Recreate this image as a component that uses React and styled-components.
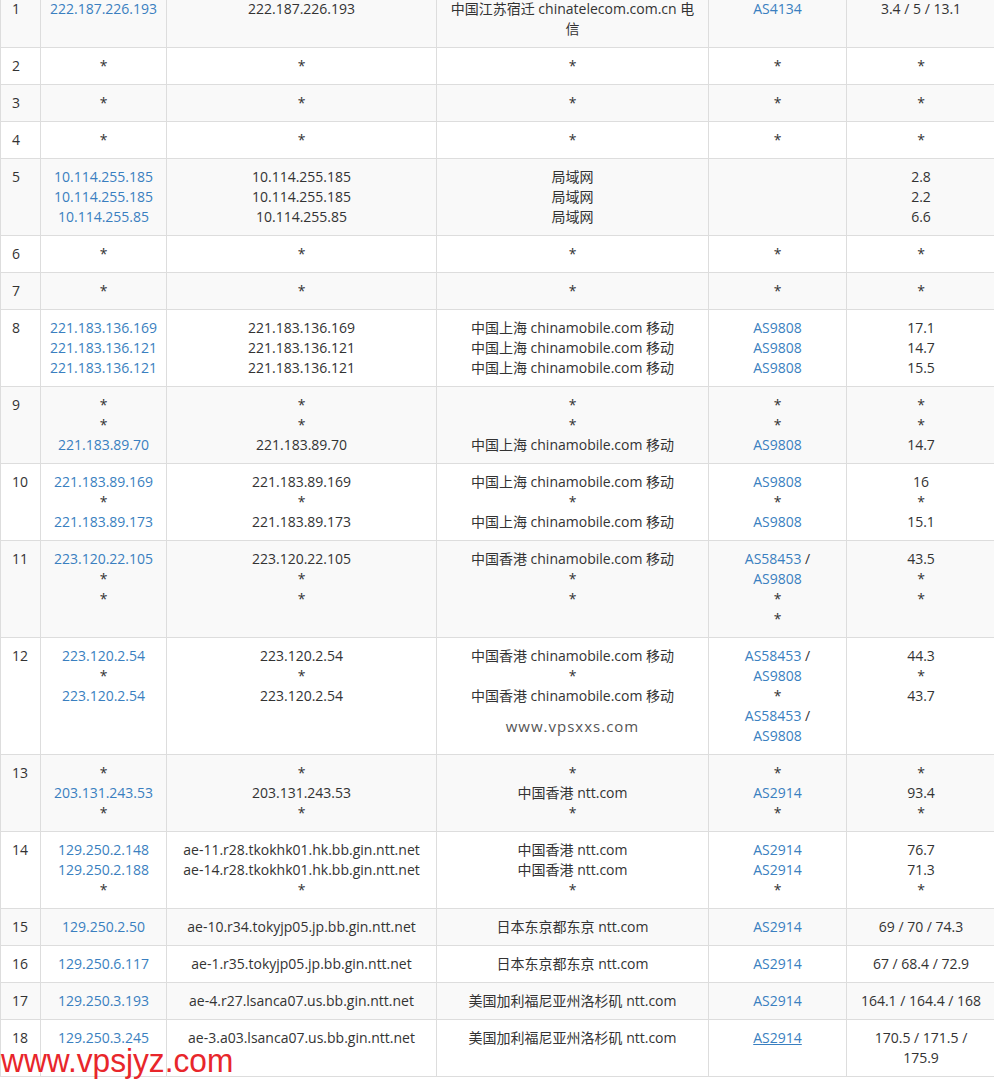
import React from "react";
import styled, { createGlobalStyle } from "styled-components";

const Global = createGlobalStyle`
  body { margin: 0; background: #fff; font-family: "Open Sans", "Noto Sans CJK SC", sans-serif; font-size: 14px; color: #333; overflow: hidden; }
`;

const Page = styled.div`position: relative; height: 1079px; overflow: hidden;`;
const Table = styled.table`
  border-collapse: collapse; table-layout: fixed; width: 995px; margin-top: -10px;
`;
const Tr = styled.tr`background: ${p => (p.$odd ? "#f9f9f9" : "#fff")};`;
const Td = styled.td`
  border: 1px solid #ddd; padding: 8px 6px; line-height: 20px; vertical-align: top;
  text-align: ${p => (p.$left ? "left" : "center")};
  ${p => p.$left && "padding-left: 11px;"}
`;
const Link = styled.span`color: #3a7fc0; ${p => p.$u && "text-decoration: underline;"}`;
const Line = styled.div``;
const Mark = styled.div`
  color: #555; letter-spacing: 1px; font-size: 15px; margin-top: 10px; line-height: 20px;
`;
const Red = styled.div`
  position: absolute; left: 1px; top: 1042px; color: #e8262b;
  font-family: "Liberation Sans", Arial, sans-serif; font-size: 33px; transform: scaleX(0.96); transform-origin: left;
`;

const L = ({ v, u }) => (v === "*" ? <Line>*</Line> : <Line><Link $u={u}>{v}</Link></Line>);
const P = ({ v }) => <Line>{v}</Line>;
const cm = "中国上海 chinamobile.com 移动";
const hk = "中国香港 chinamobile.com 移动";

const rows = [
  [["222.187.226.193"], ["222.187.226.193"], ["中国江苏宿迁 chinatelecom.com.cn 电", "信"], ["AS4134"], ["3.4 / 5 / 13.1"]],
  [["*"], ["*"], ["*"], ["*"], ["*"]],
  [["*"], ["*"], ["*"], ["*"], ["*"]],
  [["*"], ["*"], ["*"], ["*"], ["*"]],
  [["10.114.255.185", "10.114.255.185", "10.114.255.85"], ["10.114.255.185", "10.114.255.185", "10.114.255.85"], ["局域网", "局域网", "局域网"], [], ["2.8", "2.2", "6.6"]],
  [["*"], ["*"], ["*"], ["*"], ["*"]],
  [["*"], ["*"], ["*"], ["*"], ["*"]],
  [["221.183.136.169", "221.183.136.121", "221.183.136.121"], ["221.183.136.169", "221.183.136.121", "221.183.136.121"], [cm, cm, cm], ["AS9808", "AS9808", "AS9808"], ["17.1", "14.7", "15.5"]],
  [["*", "*", "221.183.89.70"], ["*", "*", "221.183.89.70"], ["*", "*", cm], ["*", "*", "AS9808"], ["*", "*", "14.7"]],
  [["221.183.89.169", "*", "221.183.89.173"], ["221.183.89.169", "*", "221.183.89.173"], [cm, "*", cm], ["AS9808", "*", "AS9808"], ["16", "*", "15.1"]],
  [["223.120.22.105", "*", "*"], ["223.120.22.105", "*", "*"], [hk, "*", "*"], ["AS58453 /|AS9808", "*", "*"], ["43.5", "*", "*"]],
  [["223.120.2.54", "*", "223.120.2.54"], ["223.120.2.54", "*", "223.120.2.54"], [hk, "*", hk], ["AS58453 /|AS9808", "*", "AS58453 /|AS9808"], ["44.3", "*", "43.7"], true],
  [["*", "203.131.243.53", "*"], ["*", "203.131.243.53", "*"], ["*", "中国香港 ntt.com", "*"], ["*", "AS2914", "*"], ["*", "93.4", "*"]],
  [["129.250.2.148", "129.250.2.188", "*"], ["ae-11.r28.tkokhk01.hk.bb.gin.ntt.net", "ae-14.r28.tkokhk01.hk.bb.gin.ntt.net", "*"], ["中国香港 ntt.com", "中国香港 ntt.com", "*"], ["AS2914", "AS2914", "*"], ["76.7", "71.3", "*"]],
  [["129.250.2.50"], ["ae-10.r34.tokyjp05.jp.bb.gin.ntt.net"], ["日本东京都东京 ntt.com"], ["AS2914"], ["69 / 70 / 74.3"]],
  [["129.250.6.117"], ["ae-1.r35.tokyjp05.jp.bb.gin.ntt.net"], ["日本东京都东京 ntt.com"], ["AS2914"], ["67 / 68.4 / 72.9"]],
  [["129.250.3.193"], ["ae-4.r27.lsanca07.us.bb.gin.ntt.net"], ["美国加利福尼亚州洛杉矶 ntt.com"], ["AS2914"], ["164.1 / 164.4 / 168"]],
  [["129.250.3.245"], ["ae-3.a03.lsanca07.us.bb.gin.ntt.net"], ["美国加利福尼亚州洛杉矶 ntt.com"], ["AS2914"], ["170.5 / 171.5 /", "175.9"], false, true],
];

const asCell = (v, u, k) =>
  v.includes("|") ? (
    <React.Fragment key={k}>
      <Line><Link>AS58453</Link> /</Line>
      <Line><Link>AS9808</Link></Line>
    </React.Fragment>
  ) : <L key={k} v={v} u={u} />;

export default function App() {
  return (
    <Page>
      <Global />
      <Table>
        <colgroup>
          <col style={{ width: 40 }} /><col style={{ width: 126 }} /><col style={{ width: 270 }} />
          <col style={{ width: 272 }} /><col style={{ width: 138 }} /><col style={{ width: 149 }} />
        </colgroup>
        <tbody>
          {rows.map((r, i) => (
            <Tr key={i} $odd={i % 2 === 0}>
              <Td $left>{i + 1}</Td>
              <Td>{r[0].map((v, k) => <L key={k} v={v} />)}</Td>
              <Td>{r[1].map((v, k) => <P key={k} v={v} />)}</Td>
              <Td>{r[2].map((v, k) => <P key={k} v={v} />)}{r[5] && <Mark>www.vpsxxs.com</Mark>}</Td>
              <Td>{r[3].map((v, k) => asCell(v, r[6], k))}</Td>
              <Td>{r[4].map((v, k) => <P key={k} v={v} />)}</Td>
            </Tr>
          ))}
        </tbody>
      </Table>
      <Red>www.vpsjyz.com</Red>
    </Page>
  );
}
